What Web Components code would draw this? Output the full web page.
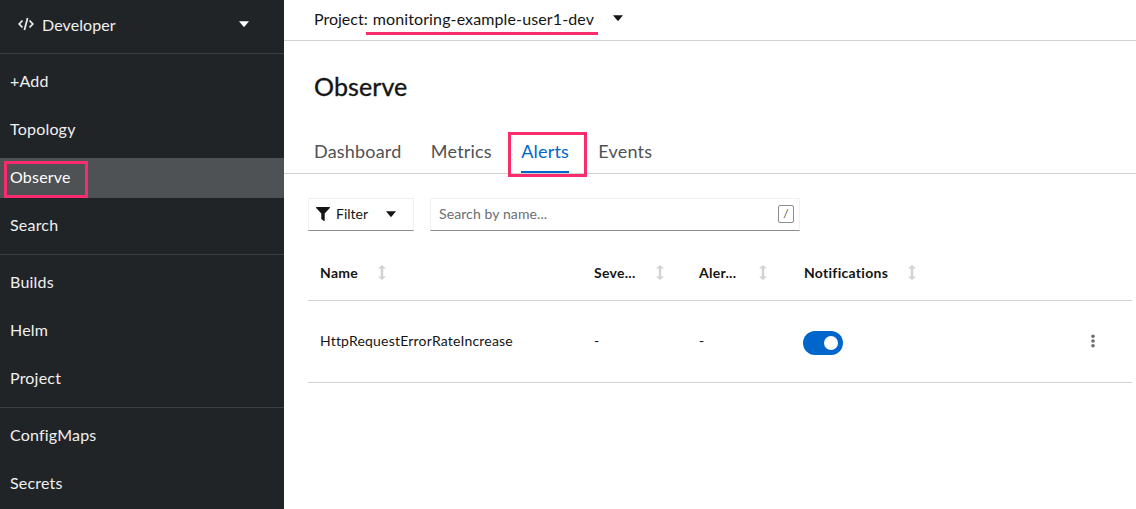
<!DOCTYPE html>
<html>
<head>
<meta charset="utf-8">
<title>Observe</title>
<style>
  html, body { margin: 0; padding: 0; height: 100%; }
  body { font-family: "Lato", "Liberation Sans", sans-serif; overflow: hidden; }
</style>
</head>
<body>
<console-page></console-page>
<script>
const caret = (w, c) => `<svg width="${w}" height="${w * 0.6}" viewBox="0 0 10 6"><path d="M0 0.3h10L5.6 5.6a.8.8 0 0 1-1.2 0z" fill="${c}"/></svg>`;
const sortIcon = (gap = 20) => `<svg style="margin-left:${gap}px" width="8" height="15" viewBox="0 0 8 15"><path d="M4 0 8 3.6H5.2v7.8H8L4 15 0 11.4h2.8V3.6H0z" fill="#d2d2d2"/></svg>`;

class SideNav extends HTMLElement {
  connectedCallback() {
    const sections = [["+Add", "Topology", "Observe", "Search"], ["Builds", "Helm", "Project"], ["ConfigMaps", "Secrets"]];
    this.attachShadow({ mode: "open" }).innerHTML = `
      <style>
        :host { display: block; flex: 0 0 284px; height: 100%; background: #212427; color: #f0f0f0; font-size: 16px; letter-spacing: .2px; overflow: hidden; }
        .switcher { height: 54px; box-sizing: border-box; border-bottom: 1px solid #3c3f42; display: flex; align-items: center; padding: 0 35px 5px 18px; }
        .switcher svg:first-child { margin-right: 8px; }
        .switcher span { flex: 1; letter-spacing: .1px; }
        section { display: flex; flex-direction: column; gap: 8px; padding: 8px 0; border-bottom: 1px solid #3c3f42; }
        section:last-child { border-bottom: 0; }
        a { display: block; position: relative; height: 40px; line-height: 38px; padding-left: 10px; }
        a.active { background: #4f5255; color: #fff; }
        a.active::before { content: ""; position: absolute; left: 4px; top: 3px; width: 84px; height: 37px; box-sizing: border-box; border: 3px solid #f92c6e; }
      </style>
      <div class="switcher">
        <svg width="16" height="14" viewBox="0 0 16 14" fill="none" stroke="#f0f0f0" stroke-width="1.7"><path d="M4.500 3.500 1.200 7l3.300 3.500M11.500 3.500 14.800 7l-3.300 3.500"/><path d="M9.600 1 6.400 13"/></svg>
        <span>Developer</span>
        ${caret(10, "#fff")}
      </div>
      ${sections.map(s => `<section>${s.map(i => `<a class="${i === "Observe" ? "active" : ""}">${i}</a>`).join("")}</section>`).join("")}
    `;
  }
}

class ProjectBar extends HTMLElement {
  connectedCallback() {
    this.attachShadow({ mode: "open" }).innerHTML = `
      <style>
        :host { display: flex; align-items: center; height: 41px; box-sizing: border-box; border-bottom: 1px solid #d2d2d2; padding: 0 0 4px 30px; font-size: 16px; color: #151515; }
        .name { position: relative; margin-left: 5px; margin-right: 19px; letter-spacing: .12px; }
        .name::after { content: ""; position: absolute; left: -7px; right: -4px; top: 23px; height: 3px; background: #f92c6e; }
      </style>
      <span>Project:</span><span class="name">monitoring-example-user1-dev</span>${caret(10, "#151515")}
    `;
  }
}

class TabBar extends HTMLElement {
  connectedCallback() {
    const tabs = ["Dashboard", "Metrics", "Alerts", "Events"];
    this.attachShadow({ mode: "open" }).innerHTML = `
      <style>
        :host { display: flex; gap: 29.3px; height: 37px; box-sizing: border-box; border-bottom: 1px solid #d2d2d2; padding-left: 30px; font-size: 18px; letter-spacing: .2px; color: #4f5255; }
        a { position: relative; line-height: 24px; padding-top: 2px; }
        a.on { color: #06c; }
        a.on::before { content: ""; position: absolute; left: 0; right: 0; bottom: 0; height: 2px; background: #06c; }
        a.on::after { content: ""; position: absolute; left: -13px; right: -18px; top: -5px; bottom: -4px; border: 3px solid #f92c6e; }
      </style>
      ${tabs.map(t => `<a class="${t === "Alerts" ? "on" : ""}">${t}</a>`).join("")}
    `;
  }
}

class FilterBar extends HTMLElement {
  connectedCallback() {
    this.attachShadow({ mode: "open" }).innerHTML = `
      <style>
        :host { display: flex; gap: 16px; margin: 24px 0 0 24px; width: 492px; height: 33px; font-size: 14px; color: #151515; }
        .filter, .search { box-sizing: border-box; height: 33px; display: flex; align-items: center; border: 1px solid #f0f0f0; border-bottom-color: #8a8d90; padding-bottom: 2px; }
        .filter { flex: 0 0 106px; padding-left: 7px; padding-right: 17px; }
        .filter svg:first-child { margin-right: 6px; }
        .filter span { flex: 1; }
        .search { flex: 1; padding-left: 8px; padding-right: 5px; color: #6a6e73; letter-spacing: .1px; }
        .search span { flex: 1; }
        kbd { box-sizing: border-box; width: 16px; height: 18px; border: 1px solid #8a8d90; border-radius: 2px; font: 12px/16px "Lato", sans-serif; text-align: center; color: #4f5255; }
      </style>
      <div class="filter">
        <svg width="14" height="14" viewBox="0 0 14 14"><path d="M.6 0h12.800c.5 0 .8.6.4 1L8.700 6.600v6.900c0 .4-.5.7-.8.4L5.600 12.300a.6.6 0 0 1-.3-.5V6.600L.2 1C-.2.6.1 0 .6 0z" fill="#151515"/></svg>
        <span>Filter</span>${caret(10, "#151515")}
      </div>
      <div class="search"><span>Search by name...</span><kbd>/</kbd></div>
    `;
  }
}

class AlertsTable extends HTMLElement {
  connectedCallback() {
    this.attachShadow({ mode: "open" }).innerHTML = `
      <style>
        :host { display: block; margin: 19px 4px 0 24px; font-size: 14px; letter-spacing: .2px; color: #151515; }
        .row { display: grid; grid-template-columns: 274px 105px 105px 1fr 40px; align-items: center; border-bottom: 1px solid #d2d2d2; box-sizing: border-box; padding-bottom: 2px; }
        .head { height: 51px; font-weight: 700; letter-spacing: .28px; padding-bottom: 5px; }
        .body { height: 82px; }
        .row > div { padding-left: 12px; display: flex; align-items: center; }
        .toggle { display: block; position: relative; width: 40px; height: 24px; border-radius: 12px; background: #06c; margin: 4px 0 0 -1px; }
        .toggle::after { content: ""; position: absolute; right: 5px; top: 5px; width: 14px; height: 14px; border-radius: 50%; background: #fff; }
        .row > .kebab { padding: 0; margin-left: -1px; }
      </style>
      <div class="row head">
        <div>Name${sortIcon()}</div><div>Seve...${sortIcon()}</div><div>Aler...${sortIcon(23)}</div><div>Notifications${sortIcon()}</div><div></div>
      </div>
      <div class="row body">
        <div>HttpRequestErrorRateIncrease</div><div>-</div><div>-</div>
        <div><span class="toggle"></span></div>
        <div class="kebab"><svg width="4" height="14" viewBox="0 0 4 14" fill="#6a6e73"><circle cx="2" cy="2.200" r="1.800"/><circle cx="2" cy="7" r="1.800"/><circle cx="2" cy="11.800" r="1.800"/></svg></div>
      </div>
    `;
  }
}

class ConsolePage extends HTMLElement {
  connectedCallback() {
    this.attachShadow({ mode: "open" }).innerHTML = `
      <style>
        :host { display: flex; width: 1136px; height: 509px; background: #fff; overflow: hidden; }
        main { flex: 1; min-width: 0; }
        h1 { margin: 29px 0 35px 30px; font-size: 25px; letter-spacing: .1px; line-height: 32px; font-weight: 400; -webkit-text-stroke: .35px #151515; color: #151515; }
      </style>
      <side-nav></side-nav>
      <main>
        <project-bar></project-bar>
        <h1>Observe</h1>
        <tab-bar></tab-bar>
        <filter-bar></filter-bar>
        <alerts-table></alerts-table>
      </main>
    `;
  }
}

customElements.define("side-nav", SideNav);
customElements.define("project-bar", ProjectBar);
customElements.define("tab-bar", TabBar);
customElements.define("filter-bar", FilterBar);
customElements.define("alerts-table", AlertsTable);
customElements.define("console-page", ConsolePage);
</script>
</body>
</html>
